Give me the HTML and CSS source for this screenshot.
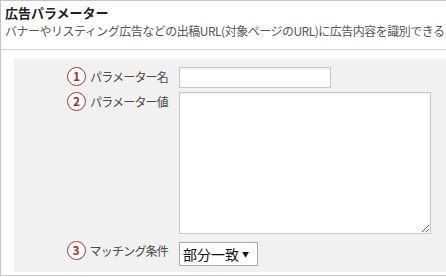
FILE: index.html
```html
<!DOCTYPE html>
<html lang="ja">
<head>
    <meta charset="UTF-8">
    <title>広告パラメーター</title>
    <link rel="stylesheet" href="styles.css">
</head>
<body>
    <div class="box">
        <div class="box-head">
            <h2>広告パラメーター</h2>
            <p>バナーやリスティング広告などの出稿URL(対象ページのURL)に広告内容を識別できる</p>
        </div>

        <!-- 設定フォーム -->
        <div class="panel">
            <label class="field-label"><span class="num">1</span>パラメーター名</label>
            <div class="field"><input type="text" class="text-input"></div>

            <label class="field-label"><span class="num">2</span>パラメーター値</label>
            <div class="field"><textarea class="text-area"></textarea></div>

            <label class="field-label"><span class="num">3</span>マッチング条件</label>
            <div class="field">
                <span class="select-wrap">
                    <select class="select">
                        <option>部分一致</option>
                        <option>完全一致</option>
                    </select>
                </span>
            </div>
        </div>
    </div>
</body>
</html>
```

FILE: styles.css
```css
body {
    margin: 0;
    overflow: hidden;
    background: #fff;
    font-family: 'Noto Sans CJK JP', 'DejaVu Sans', sans-serif;
    color: #333;
}

.box {
    width: 460px;
    border: 1px solid #c4c4c4;
    padding: 3px 0 3px 13px;
}

.box-head {
    padding-bottom: 9px;
    border-bottom: 1px solid #cfcfcf;
    margin-bottom: 9px;
    margin-left: -13px;
    padding-left: 4px;
}

.box-head h2 {
    margin: 0;
    font-size: 13px;
    line-height: 18px;
    font-weight: bold;
    color: #222;
}

.box-head p {
    margin: 0;
    font-size: 12px;
    line-height: 18px;
    letter-spacing: -0.5px;
    color: #555;
    white-space: nowrap;
}

.panel {
    background: #f1f1f1;
    padding: 8px 0 6px 0;
    display: grid;
    grid-template-columns: 154px 1fr;
    column-gap: 11px;
    row-gap: 4px;
}

.panel .field-label:nth-last-of-type(1) {
    margin-top: 3px;
}

.field-label {
    display: flex;
    align-items: center;
    justify-content: flex-end;
    height: 18px;
    font-size: 12px;
    letter-spacing: -0.8px;
    color: #4a4a4a;
}

.field:last-child {
    margin-top: 3px;
}

.num {
    display: inline-flex;
    align-items: center;
    justify-content: center;
    width: 17px;
    height: 17px;
    margin-right: 4px;
    border: 1.5px solid #a33a36;
    border-radius: 50%;
    background: #fff;
    color: #a3302c;
    font-size: 12px;
    font-weight: bold;
    letter-spacing: 0;
    line-height: 1;
}

.text-input {
    display: block;
    box-sizing: border-box;
    width: 152px;
    height: 21px;
    margin: 0;
    border: 1px solid #c8c8c8;
    box-shadow: inset 0 1px 2px rgba(0, 0, 0, 0.08);
    background: #fff;
}

.text-area {
    display: block;
    box-sizing: border-box;
    width: 252px;
    height: 142px;
    margin: 0;
    border: 1px solid #c8c8c8;
    box-shadow: inset 0 1px 2px rgba(0, 0, 0, 0.08);
    background: #fff;
}

.select-wrap {
    position: relative;
    display: inline-block;
}

.select-wrap::after {
    content: '▼';
    position: absolute;
    right: 9px;
    top: 7px;
    font-size: 7px;
    color: #111;
    pointer-events: none;
}

.select {
    display: block;
    box-sizing: border-box;
    width: 79px;
    height: 24px;
    margin: 0;
    padding: 0 0 0 3px;
    -webkit-appearance: none;
    appearance: none;
    border: 1px solid #a9a9a9;
    border-radius: 0;
    background: #fff;
    font-family: 'Noto Sans CJK JP', sans-serif;
    font-size: 14px;
    color: #111;
}
```
